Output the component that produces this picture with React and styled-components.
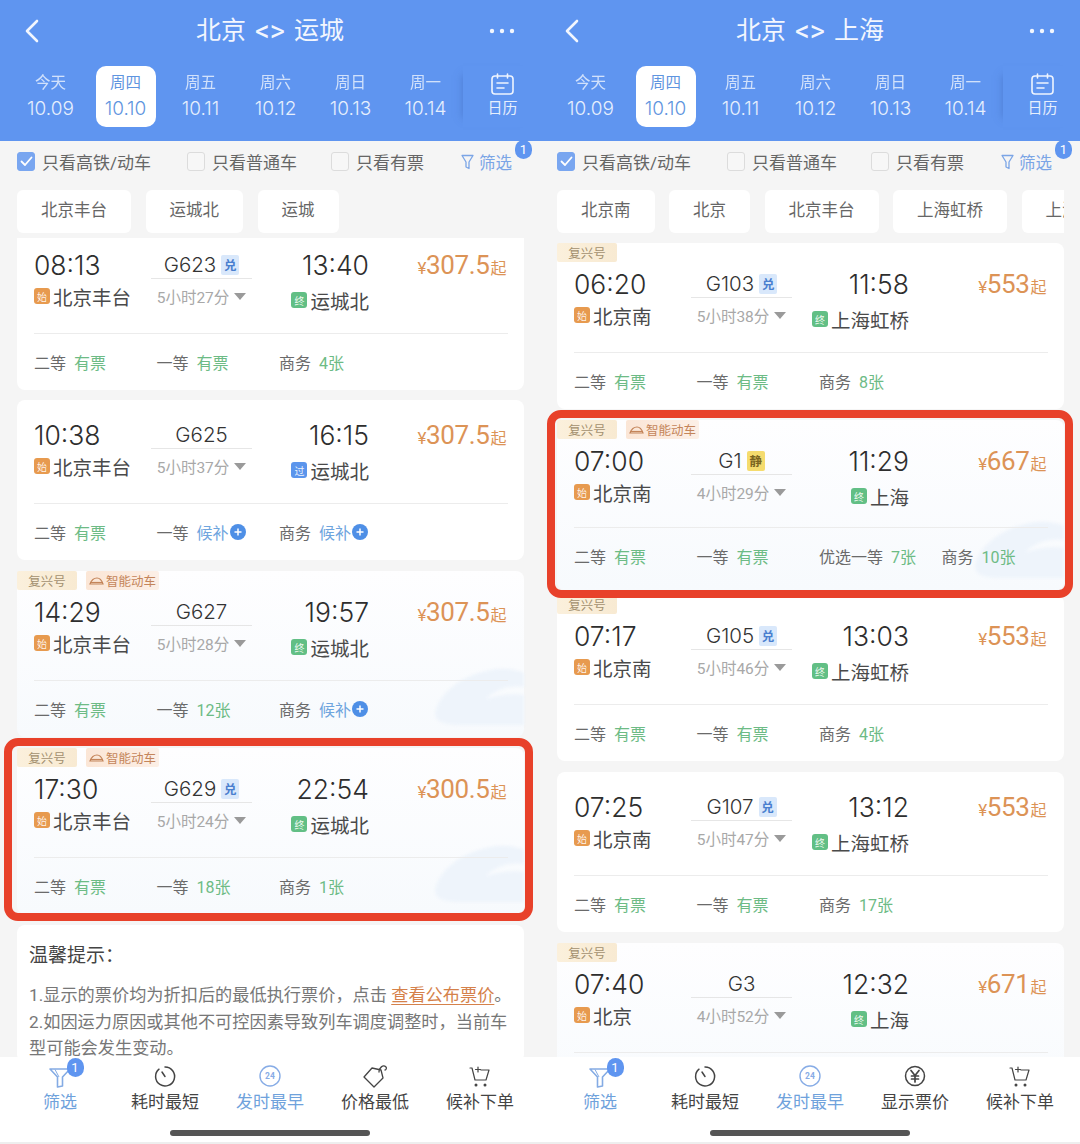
import styled, { createGlobalStyle } from 'styled-components';

const GlobalStyle = createGlobalStyle`
  html, body {
    margin: 0;
    padding: 0;
    background: #f5f5f5;
  }
  * {
    box-sizing: border-box;
  }
  body {
    font-family: Roboto, "Noto Sans CJK SC", sans-serif;
  }
`;

const Page = styled.div`
  display: flex;
  width: 1080px;
  height: 1144px;
  overflow: hidden;
`;

const Phone = styled.div`
  display: flex;
  flex-direction: column;
  width: 540px;
  height: 1144px;
  background: #f5f5f5;
  overflow: hidden;
`;

// 顶部蓝色区域
const Header = styled.header`
  height: 141px;
  flex: none;
  background: #5f95f0;
  color: #fff;
`;

const TitleRow = styled.div`
  display: flex;
  align-items: center;
  justify-content: space-between;
  height: 62px;
  padding: 0 25px;
`;

const Title = styled.h1`
  display: flex;
  align-items: center;
  gap: 9px;
  margin: 0;
  font-size: 25px;
  font-weight: 400;
  line-height: 62px;
  color: #f2f6fe;
`;

const Arrows = styled.span`
  font-size: 29px;
  line-height: 62px;
`;

const DateRow = styled.div`
  display: grid;
  grid-template-columns: repeat(6, 75px) 1fr;
  height: 61px;
  margin-top: 4px;
  padding-left: 13px;
`;

const DateItem = styled.div`
  display: flex;
  flex-direction: column;
  align-items: center;
  justify-content: flex-start;
  width: ${(p) => (p.$active ? '60px' : '75px')};
  margin: 0 auto;
  padding-top: 7px;
  border-radius: 10px;
  background: ${(p) => (p.$active ? '#fff' : 'transparent')};
  color: ${(p) => (p.$active ? '#5f95e0' : '#e6effd')};
`;

const DayLabel = styled.span`
  font-size: 15.5px;
  line-height: 20px;
  opacity: ${(p) => (p.$active ? 1 : 0.85)};
`;

const DayNum = styled.span`
  margin-top: 3px;
  font-family: Inter, Roboto, sans-serif;
  font-size: 19px;
  line-height: 25px;
  font-weight: 300;
`;

const CalendarCell = styled.div`
  display: flex;
  flex-direction: column;
  align-items: center;
  padding: 7px 0 0 4px;
  width: 75px;
  box-shadow: -9px 0 8px -9px rgba(60, 100, 180, 0.5);
  font-size: 15px;
  line-height: 20px;
  color: #e6effd;

  svg {
    margin-bottom: 3px;
  }
`;

// 筛选行
const FilterRow = styled.div`
  display: grid;
  grid-template-columns: 170px 144px 130px auto;
  align-items: center;
  height: 49px;
  flex: none;
  padding: 0 9px 8px 17px;
`;

const Check = styled.label`
  display: flex;
  align-items: center;
  gap: 7px;
  font-size: 17px;
  color: #666;
`;

const Box = styled.span`
  display: flex;
  align-items: center;
  justify-content: center;
  width: 18px;
  height: 19px;
  border-radius: 3px;
  border: 1.5px solid ${(p) => (p.$on ? '#79a6f0' : '#dcdcdc')};
  background: ${(p) => (p.$on ? '#79a6f0' : '#f7f7f7')};
`;

const FilterLink = styled.div`
  position: relative;
  display: flex;
  align-items: center;
  gap: 5px;
  font-size: 16.5px;
  color: #7ba5e6;
`;

const CountBadge = styled.span`
  position: absolute;
  display: flex;
  align-items: center;
  justify-content: center;
  top: ${(p) => p.$top}px;
  left: ${(p) => p.$left}px;
  width: 17px;
  height: 19px;
  border-radius: 9px;
  background: #5f95f0;
  color: #fff;
  font-size: 13px;
  font-weight: 400;
`;

// 车站标签
const TabRow = styled.div`
  display: flex;
  gap: 14.5px;
  height: 48px;
  flex: none;
  margin: 0 16px 0 17px;
  overflow: hidden;
`;

const Tab = styled.div`
  flex: none;
  height: 43px;
  padding: 0 24px;
  border-radius: 6px;
  background: #fff;
  font-size: 16.5px;
  line-height: 42px;
  color: #666;
`;

// 车次列表
const List = styled.div`
  flex: 1;
  min-height: 0;
  padding: ${(p) => p.$top}px 16px 0 17px;
  overflow: hidden;
`;

const Card = styled.article`
  position: relative;
  z-index: ${(p) => (p.$marked ? 2 : 1)};
  margin-top: ${(p) => p.$offset || 0}px;
  margin-bottom: ${(p) => (p.$gap === undefined ? 11 : p.$gap)}px;
  padding-top: ${(p) => (p.$tagged ? 0 : 19)}px;
  padding-bottom: ${(p) => (p.$compact ? 6 : 0)}px;
  border-radius: 8px;
  background: ${(p) =>
    p.$tinted ? 'linear-gradient(180deg, #fefeff 0%, #f7fafd 100%)' : '#fff'};
`;

const Wave = styled.svg`
  position: absolute;
  right: 0;
  bottom: 8px;
  width: 90px;
  height: 62px;
  filter: blur(1.5px);
`;

const Marker = styled.div`
  position: absolute;
  top: -10px;
  left: ${(p) => p.$left}px;
  right: -9px;
  bottom: ${(p) => p.$bottom}px;
  border: 8px solid #e8412a;
  border-radius: 14px;
`;

const TagRow = styled.div`
  position: relative;
  display: flex;
  gap: 9px;
  height: 19px;
  margin-bottom: 6px;
`;

const Tag = styled.span`
  display: flex;
  align-items: center;
  justify-content: center;
  gap: 2px;
  width: ${(p) => (p.$smart ? '73px' : '60px')};
  height: 19px;
  border-radius: 2px;
  font-size: 12.5px;
  color: ${(p) => (p.$smart ? '#c4855a' : '#a3906f')};
  background: ${(p) =>
    p.$smart
      ? 'linear-gradient(90deg, #fbe6d6, #fcefe6)'
      : 'linear-gradient(90deg, #fbf0dc, #f8ead2)'};
`;

const Main = styled.div`
  position: relative;
  display: grid;
  grid-template-columns: 117px 101px 117px 1fr;
  padding: 0 18px 0 17px;
`;

const Side = styled.div`
  display: flex;
  flex-direction: column;
  align-items: ${(p) => (p.$end ? 'flex-end' : 'flex-start')};
`;

const Time = styled.div`
  height: 32px;
  font-family: Inter, Roboto, sans-serif;
  font-size: 26.5px;
  font-weight: 300;
  line-height: 32px;
  color: #2e2e2e;
`;

const Station = styled.div`
  display: flex;
  align-items: center;
  gap: 3px;
  height: 34px;
  padding: ${(p) => (p.$end ? '4px 0 0' : '0 0 4px')};
  font-size: 19.5px;
  color: #4a4a4a;
`;

const StopBadge = styled.span`
  display: flex;
  align-items: center;
  justify-content: center;
  width: 16px;
  height: 16px;
  border-radius: 3px;
  font-size: 10px;
  color: rgba(255, 255, 255, 0.9);
  background: ${(p) => p.$color};
`;

const Center = styled.div`
  display: flex;
  flex-direction: column;
  align-items: center;
`;

const TrainRow = styled.div`
  display: flex;
  align-items: center;
  justify-content: center;
  gap: 5px;
  width: 100%;
  height: 30px;
  padding-top: 2px;
  border-bottom: 1.5px solid #e6e6e6;
  font-family: Inter, Roboto, "Noto Sans CJK SC", sans-serif;
  font-size: 20.5px;
  font-weight: 300;
  line-height: 26px;
  color: #333;
`;

const TrainBadge = styled.span`
  display: flex;
  align-items: center;
  justify-content: center;
  width: 18px;
  height: 20px;
  border-radius: 2px;
  font-family: "Noto Sans CJK SC", sans-serif;
  font-size: 12.5px;
  font-weight: 700;
  background: ${(p) => (p.$quiet ? '#f5dc6e' : '#d9e8fb')};
  color: ${(p) => (p.$quiet ? '#7a6520' : '#4a7fcf')};
`;

const Duration = styled.div`
  display: flex;
  align-items: center;
  gap: 5px;
  height: 34px;
  font-size: 15.5px;
  color: #a8a8a8;

  &::after {
    content: '';
    width: 0;
    height: 0;
    border-left: 6px solid transparent;
    border-right: 6px solid transparent;
    border-top: 7px solid #9a9a9a;
  }
`;

const Price = styled.div`
  display: flex;
  align-items: baseline;
  justify-content: flex-end;
  height: 32px;
  font-size: 26px;
  letter-spacing: -0.4px;
  line-height: 32px;
  color: #dc9356;
`;

const Yuan = styled.span`
  font-size: 17px;
`;

const Qi = styled.span`
  margin-left: 1px;
  font-size: 16px;
`;

const Divider = styled.div`
  position: relative;
  height: 1px;
  margin: ${(p) => (p.$compact ? 16 : 18)}px 16px 0 17px;
  background: #ececec;
`;

const Seats = styled.div`
  position: relative;
  display: grid;
  grid-template-columns: repeat(4, 122.5px);
  align-items: center;
  height: 56px;
  padding-left: 17px;
`;

const Seat = styled.div`
  display: flex;
  align-items: center;
  gap: 8px;
  font-size: 16px;
  color: #6a6a6a;
`;

const SeatState = styled.span`
  display: flex;
  align-items: center;
  gap: 1px;
  color: ${(p) => (p.$wait ? '#6fa5de' : '#6dbb85')};
`;

// 温馨提示
const Tips = styled.section`
  padding: 16px 12px 0;
  border-radius: 8px;
  background: #fff;
`;

const TipsTitle = styled.h3`
  margin: 0 0 11px;
  font-size: 19px;
  font-weight: 400;
  line-height: 30px;
  color: #444;
`;

const TipsLine = styled.p`
  margin: 0;
  font-size: 17.2px;
  line-height: 26.5px;
  color: #777;
`;

const TipsLink = styled.span`
  color: #d5814a;
  text-decoration: underline;
  text-underline-offset: 3px;
`;

// 底部栏
const BottomBar = styled.nav`
  position: relative;
  z-index: 3;
  height: 87px;
  flex: none;
  padding: 0 7.5px;
  background: #fff;
  border-bottom: 2px solid #eee;
`;

const BarGrid = styled.div`
  display: grid;
  grid-template-columns: repeat(5, 105px);
`;

const BarItem = styled.div`
  position: relative;
  display: flex;
  flex-direction: column;
  align-items: center;
  padding-top: 6px;
  font-size: 17px;
  line-height: 24px;
  color: ${(p) => (p.$active ? '#6fa2dc' : '#444')};

  svg {
    display: block;
    height: 26px;
    margin-bottom: 1px;
  }
`;

const HomeBar = styled.div`
  position: absolute;
  left: 170px;
  bottom: 6px;
  width: 200px;
  height: 6px;
  border-radius: 3px;
  background: #555;
`;

const BackIcon = () => (
  <svg width="26" height="24" viewBox="0 0 26 24" fill="none" stroke="#f2f6fe" strokeWidth="2.6" strokeLinecap="round" strokeLinejoin="round">
    <path d="M12 2 2 12l10 10" />
  </svg>
);

const MoreIcon = () => (
  <svg width="26" height="6" viewBox="0 0 26 6" fill="#f2f6fe">
    <circle cx="3" cy="3" r="2.2" />
    <circle cx="13" cy="3" r="2.2" />
    <circle cx="23" cy="3" r="2.2" />
  </svg>
);

const CalendarIcon = () => (
  <svg width="23" height="22" viewBox="0 0 23 22" fill="none" stroke="#eef4fe" strokeWidth="1.6" strokeLinecap="round">
    <rect x="1" y="3" width="21" height="18" rx="3" />
    <path d="M6.500 1v4M16.500 1v4M6 10h11M6 15h7" />
  </svg>
);

const FilterIcon = () => (
  <svg width="13" height="16" viewBox="0 0 13 16" fill="none" stroke="#7ba5e6" strokeWidth="1.3" strokeLinejoin="round">
    <path d="M1 1.500h11L8 8v6.500L5 13V8z" />
  </svg>
);

const TickIcon = () => (
  <svg width="13" height="11" viewBox="0 0 13 11" fill="none" stroke="#fff" strokeWidth="1.8" strokeLinecap="round" strokeLinejoin="round">
    <path d="M1.500 5.500 5 9l6.500-7.500" />
  </svg>
);

const TrainIcon = () => (
  <svg width="15" height="8" viewBox="0 0 15 8" fill="none" stroke="#c4855a" strokeWidth="1.2">
    <path d="M1 7c1.500-4 4-6 7-6 3 0 5 3 6 6z" />
    <path d="M1 5.500h13" />
  </svg>
);

const PlusIcon = () => (
  <svg width="16" height="16" viewBox="0 0 16 16">
    <circle cx="8" cy="8" r="8" fill="#4e8fe6" />
    <path d="M8 4.500v7M4.500 8h7" stroke="#fff" strokeWidth="1.500" />
  </svg>
);

const WaveDecor = () => (
  <Wave viewBox="0 0 90 62" fill="#eef4fb">
    <path d="M2 42C8 24 30 6 62 2c12-1 22 1 28 4v14c-14-2-28 2-38 12 12-4 28-6 38-4v30H24C8 58-2 54 2 42z" />
  </Wave>
);

const FunnelBarIcon = () => (
  <svg width="24" height="26" viewBox="0 0 24 26" fill="none" stroke="#84abe4" strokeWidth="1.600" strokeLinejoin="round">
    <path d="M2 6h20l-7.500 8v9l-5 1v-10z" />
    <path d="M7 6.500 11 14" strokeWidth="1" />
  </svg>
);

const ClockBarIcon = () => (
  <svg width="24" height="26" viewBox="0 0 24 26" fill="none" stroke="#444" strokeWidth="1.500" strokeLinecap="round">
    <path d="M12 4a9.500 9.500 0 1 1-6 2.200" />
    <path d="M9 9l3 4.500" />
  </svg>
);

const EarlyBarIcon = () => (
  <svg width="24" height="26" viewBox="0 0 24 26" fill="none">
    <circle cx="12" cy="13" r="10" stroke="#87ace6" strokeWidth="1.400" />
    <text x="12" y="16" textAnchor="middle" fontSize="8.500" fontWeight="700" fontFamily="Roboto, sans-serif" fill="#87ace6">24</text>
  </svg>
);

const TagBarIcon = () => (
  <svg width="26" height="26" viewBox="0 0 26 26" fill="none" stroke="#444" strokeWidth="1.300" strokeLinejoin="round" strokeLinecap="round">
    <path d="M2 14 10 5l9 2 2 8-9 9z" />
    <path d="M17 9c0-4 4-8 7-5 1 1 0 3-1 3" />
  </svg>
);

const YenBarIcon = () => (
  <svg width="24" height="26" viewBox="0 0 24 26" fill="none" stroke="#444" strokeWidth="1.500" strokeLinecap="round" strokeLinejoin="round">
    <circle cx="12" cy="13" r="9.500" />
    <path d="M8 7.500l4 5 4-5M12 12.500V19M8.500 13h7M8.500 16h7" strokeWidth="1.700" />
  </svg>
);

const CartBarIcon = () => (
  <svg width="22" height="26" viewBox="0 0 22 26" fill="none" stroke="#444" strokeWidth="1.200" strokeLinecap="round" strokeLinejoin="round">
    <path d="M1 5h2l3 12h11l3-10h-8" />
    <path d="M9 4v5M6.500 6.500h5" />
    <circle cx="7" cy="22" r="0.900" fill="#444" />
    <circle cx="16" cy="22" r="0.900" fill="#444" />
  </svg>
);

const stopColors = { 始: '#e79a4f', 终: '#62bf85', 过: '#5b95ec' };

const dates = [
  ['今天', '10.09'],
  ['周四', '10.10'],
  ['周五', '10.11'],
  ['周六', '10.12'],
  ['周日', '10.13'],
  ['周一', '10.14'],
];

const leftTrains = [
  {
    no: 'G623', badge: '兑', from: '08:13', to: '13:40', start: '北京丰台', end: '运城北', stop: '终',
    dur: '5小时27分', yen: '307.5', seats: [['二等', '有票'], ['一等', '有票'], ['商务', '4张']],
    offset: -8, gap: 10,
  },
  {
    no: 'G625', from: '10:38', to: '16:15', start: '北京丰台', end: '运城北', stop: '过',
    dur: '5小时37分', yen: '307.5', seats: [['二等', '有票'], ['一等', '候补'], ['商务', '候补']],
  },
  {
    no: 'G627', from: '14:29', to: '19:57', start: '北京丰台', end: '运城北', stop: '终', fuxing: true, smart: true,
    dur: '5小时28分', yen: '307.5', seats: [['二等', '有票'], ['一等', '12张'], ['商务', '候补']],
  },
  {
    no: 'G629', badge: '兑', from: '17:30', to: '22:54', start: '北京丰台', end: '运城北', stop: '终', fuxing: true, smart: true,
    dur: '5小时24分', yen: '300.5', seats: [['二等', '有票'], ['一等', '18张'], ['商务', '1张']],
    marker: { left: -13, bottom: -7 },
  },
];

const rightTrains = [
  {
    no: 'G103', badge: '兑', from: '06:20', to: '11:58', start: '北京南', end: '上海虹桥', stop: '终', fuxing: true,
    dur: '5小时38分', yen: '553', seats: [['二等', '有票'], ['一等', '有票'], ['商务', '8张']],
  },
  {
    no: 'G1', badge: '静', from: '07:00', to: '11:29', start: '北京南', end: '上海', stop: '终', fuxing: true, smart: true,
    dur: '4小时29分', yen: '667', seats: [['二等', '有票'], ['一等', '有票'], ['优选一等', '7张'], ['商务', '10张']],
    marker: { left: -10, bottom: -8 }, compact: true, gap: 5,
  },
  {
    no: 'G105', badge: '兑', from: '07:17', to: '13:03', start: '北京南', end: '上海虹桥', stop: '终', fuxing: true,
    dur: '5小时46分', yen: '553', seats: [['二等', '有票'], ['一等', '有票'], ['商务', '4张']],
  },
  {
    no: 'G107', badge: '兑', from: '07:25', to: '13:12', start: '北京南', end: '上海虹桥', stop: '终',
    dur: '5小时47分', yen: '553', seats: [['二等', '有票'], ['一等', '有票'], ['商务', '17张']],
  },
  {
    no: 'G3', from: '07:40', to: '12:32', start: '北京', end: '上海', stop: '终', fuxing: true, tinted: true,
    dur: '4小时52分', yen: '671', seats: [['二等', '有票'], ['一等', '有票'], ['商务', '有票']],
  },
];

const TrainCard = ({ train }) => {
  const tagged = train.fuxing || train.smart;
  return (
    <Card
      $tagged={tagged}
      $tinted={train.smart || train.tinted}
      $marked={!!train.marker}
      $offset={train.offset}
      $gap={train.gap}
      $compact={train.compact}
    >
      {train.smart && <WaveDecor />}
      {tagged && (
        <TagRow>
          <Tag>复兴号</Tag>
          {train.smart && (
            <Tag $smart>
              <TrainIcon />
              智能动车
            </Tag>
          )}
        </TagRow>
      )}
      <Main>
        <Side>
          <Time>{train.from}</Time>
          <Station>
            <StopBadge $color={stopColors['始']}>始</StopBadge>
            {train.start}
          </Station>
        </Side>
        <Center>
          <TrainRow>
            {train.no}
            {train.badge && <TrainBadge $quiet={train.badge === '静'}>{train.badge}</TrainBadge>}
          </TrainRow>
          <Duration>{train.dur}</Duration>
        </Center>
        <Side $end>
          <Time>{train.to}</Time>
          <Station $end>
            <StopBadge $color={stopColors[train.stop]}>{train.stop}</StopBadge>
            {train.end}
          </Station>
        </Side>
        <Price>
          <Yuan>¥</Yuan>
          {train.yen}
          <Qi>起</Qi>
        </Price>
      </Main>
      <Divider $compact={train.compact} />
      <Seats>
        {train.seats.map(([label, state]) => (
          <Seat key={label}>
            {label}
            <SeatState $wait={state === '候补'}>
              {state}
              {state === '候补' && <PlusIcon />}
            </SeatState>
          </Seat>
        ))}
      </Seats>
      {train.marker && <Marker $left={train.marker.left} $bottom={train.marker.bottom} />}
    </Card>
  );
};

const PhoneView = ({ from, to, tabs, trains, listTop, priceTab, children }) => (
  <Phone>
    <Header>
      <TitleRow>
        <BackIcon />
        <Title>
          {from}
          <Arrows>{'<>'}</Arrows>
          {to}
        </Title>
        <MoreIcon />
      </TitleRow>
      <DateRow>
        {dates.map(([day, num], i) => (
          <DateItem key={num} $active={i === 1}>
            <DayLabel $active={i === 1}>{day}</DayLabel>
            <DayNum>{num}</DayNum>
          </DateItem>
        ))}
        <CalendarCell>
          <CalendarIcon />
          日历
        </CalendarCell>
      </DateRow>
    </Header>
    <FilterRow>
      <Check><Box $on><TickIcon /></Box>只看高铁/动车</Check>
      <Check><Box />只看普通车</Check>
      <Check><Box />只看有票</Check>
      <FilterLink>
        <FilterIcon />
        筛选
        <CountBadge $top={-10} $left={54}>1</CountBadge>
      </FilterLink>
    </FilterRow>
    <TabRow>
      {tabs.map((t) => (
        <Tab key={t}>{t}</Tab>
      ))}
    </TabRow>
    <List $top={listTop}>
      {trains.map((t) => (
        <TrainCard key={t.no} train={t} />
      ))}
      {children}
    </List>
    <BottomBar>
      <BarGrid>
        <BarItem $active>
          <FunnelBarIcon />
          筛选
          <CountBadge $top={1} $left={59}>1</CountBadge>
        </BarItem>
        <BarItem><ClockBarIcon />耗时最短</BarItem>
        <BarItem $active><EarlyBarIcon />发时最早</BarItem>
        {priceTab}
        <BarItem><CartBarIcon />候补下单</BarItem>
      </BarGrid>
      <HomeBar />
    </BottomBar>
  </Phone>
);

export default function App() {
  return (
    <>
      <GlobalStyle />
      <Page>
        <PhoneView
          from="北京"
          to="运城"
          tabs={['北京丰台', '运城北', '运城']}
          trains={leftTrains}
          listTop={0}
          priceTab={<BarItem><TagBarIcon />价格最低</BarItem>}
        >
          <Tips>
            <TipsTitle>温馨提示：</TipsTitle>
            <TipsLine>1.显示的票价均为折扣后的最低执行票价，点击 <TipsLink>查看公布票价</TipsLink>。</TipsLine>
            <TipsLine>2.如因运力原因或其他不可控因素导致列车调度调整时，当前车型可能会发生变动。</TipsLine>
          </Tips>
        </PhoneView>
        <PhoneView
          from="北京"
          to="上海"
          tabs={['北京南', '北京', '北京丰台', '上海虹桥', '上海']}
          trains={rightTrains}
          listTop={5}
          priceTab={<BarItem><YenBarIcon />显示票价</BarItem>}
        />
      </Page>
    </>
  );
}
